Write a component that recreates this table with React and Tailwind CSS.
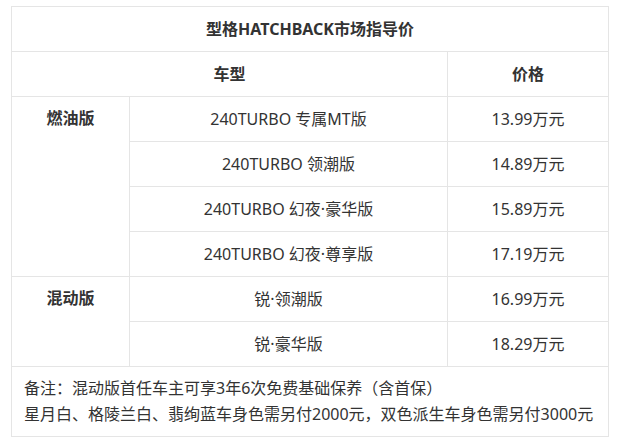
import React from 'react';

const rows = [
  { group: '燃油版', span: 4, name: '240TURBO 专属MT版', price: '13.99万元' },
  { name: '240TURBO 领潮版', price: '14.89万元' },
  { name: '240TURBO 幻夜·豪华版', price: '15.89万元' },
  { name: '240TURBO 幻夜·尊享版', price: '17.19万元' },
  { group: '混动版', span: 2, name: '锐·领潮版', price: '16.99万元' },
  { name: '锐·豪华版', price: '18.29万元' },
];

export default function App() {
  return (
    <div
      className="bg-white pt-[6px] pl-[11px] w-[617px] h-[447px] text-[#333] text-[16px]"
      style={{ fontFamily: '"Noto Sans", "Noto Sans CJK SC", sans-serif' }}
    >
      <table className="border-collapse w-[597px] table-fixed">
        <colgroup>
          <col className="w-[118px]" />
          <col className="w-[318px]" />
          <col className="w-[161px]" />
        </colgroup>
        <tbody>
          <tr className="h-[45px]">
            <td colSpan={3} className="border border-[#e5e5e5] text-center font-bold">
              型格HATCHBACK市场指导价
            </td>
          </tr>
          <tr className="h-[45px]">
            <td colSpan={2} className="border border-[#e5e5e5] text-center font-bold">车型</td>
            <td className="border border-[#e5e5e5] text-center font-bold">价格</td>
          </tr>
          {rows.map((r, i) => (
            <tr key={i} className="h-[45px]">
              {r.group && (
                <td rowSpan={r.span} className="border border-[#e5e5e5] text-center font-bold align-top pt-[9px]">
                  {r.group}
                </td>
              )}
              <td className="border border-[#e5e5e5] text-center">{r.name}</td>
              <td className="border border-[#e5e5e5] text-center">{r.price}</td>
            </tr>
          ))}
          <tr>
            <td colSpan={3} className="border border-[#e5e5e5] px-[12px] pt-[8px] pb-[9px] leading-[26px]">
              <p>备注：混动版首任车主可享3年6次免费基础保养（含首保）</p>
              <p>星月白、格陵兰白、翡绚蓝车身色需另付2000元，双色派生车身色需另付3000元</p>
            </td>
          </tr>
        </tbody>
      </table>
    </div>
  );
}
